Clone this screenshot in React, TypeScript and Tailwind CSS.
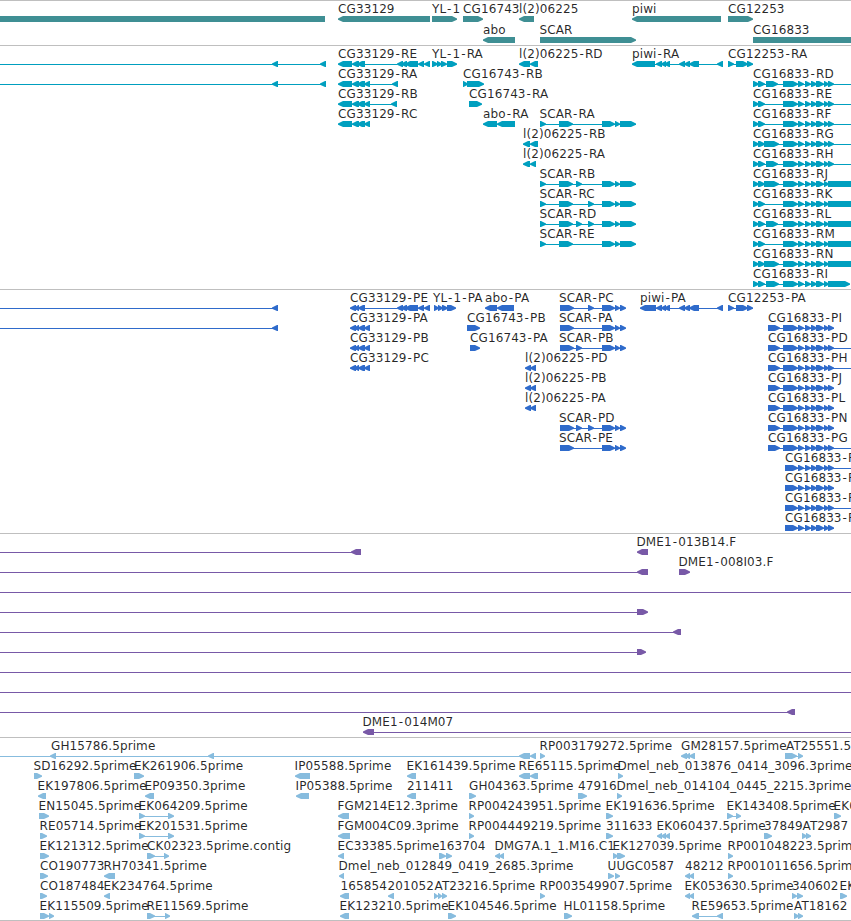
// Glyph notation: "a<b" reverse-strand block, "a>b" forward-strand block, "a-b" connector line.
type Feature = [row: number, x: number, label: string, glyphs: string];

type Track = {
  id: string;
  height: string;
  color: string;
  pitch: number;
  features: Feature[];
};

const SCAR_R = "540-636 540>546 559>573 602>615 615>620 620>636";
const SCAR_P = "560-625 560>574 602>615 615>620 620>626";
const TAIL = "798>804 805>811 811>817 816>824 824>829 828>834";
const R_START = "753-851 753>759 758>765 783>798 " + TAIL;
const R_LONG = R_START + " 828>880";
const P_START = "768-834 768>780 783>798 " + TAIL;
const P_SHORT = "785-834 785>798 " + TAIL;
const RA_EXONS = "338<352 352<359 357<365 364<370";
const PA_EXONS = "350<356 354<359 358<365 364<370";

const tracks: Track[] = [
  {
    id: "genes",
    height: "h-[45px]",
    color: "#3f8f94",
    pitch: 21,
    features: [
      [0, 0, "", "-20<325"],
      [0, 338, "CG33129", "338<430"],
      [0, 432, "YL-1", "432>457"],
      [0, 463, "CG16743", "463>483"],
      [0, 519, "l(2)06225", "519<534"],
      [0, 632, "piwi", "632<721"],
      [0, 728, "CG12253", "728>753"],
      [1, 483, "abo", "483<515"],
      [1, 539.5, "SCAR", "540>636"],
      [1, 753, "CG16833", "753>880"],
    ],
  },
  {
    id: "transcripts",
    height: "h-[244px]",
    color: "#009fbf",
    pitch: 20,
    features: [
      [0, 0, "", "0-325 272<278 320<326"],
      [0, 338, "CG33129-RE", "338<352 352<359 357<365 365-397 397<403 401<407 405<418 418<424 424<430"],
      [0, 432, "YL-1-RA", "432>438 437>442 441>447 447>457"],
      [0, 519, "l(2)06225-RD", "519<530 530<538"],
      [0, 632, "piwi-RA", "655-722 632<655 656<662 661<666 664<670 679<685 684<690 689<699 717<723"],
      [0, 728, "CG12253-RA", "728-753 728>734 736>748 747>753"],
      [1, 0, "", "0-325 272<278 320<326"],
      [1, 338, "CG33129-RA", RA_EXONS + " 370-393 392<398"],
      [1, 463, "CG16743-RB", "463>468 467>484"],
      [1, 753, "CG16833-RD", R_START + " 766>778"],
      [2, 338, "CG33129-RB", RA_EXONS + " 370-393 391<397"],
      [2, 469, "CG16743-RA", "469>482"],
      [2, 753, "CG16833-RE", R_START],
      [3, 338, "CG33129-RC", RA_EXONS],
      [3, 483, "abo-RA", "483<497 497<515"],
      [3, 539.5, "SCAR-RA", SCAR_R],
      [3, 753, "CG16833-RF", R_START],
      [4, 523, "l(2)06225-RB", "523<530 530<538"],
      [4, 753, "CG16833-RG", R_START + " 764>779"],
      [5, 523, "l(2)06225-RA", "523<530 530<536"],
      [5, 753, "CG16833-RH", R_START + " 766>778"],
      [6, 539.5, "SCAR-RB", SCAR_R + " 576>582"],
      [6, 753, "CG16833-RJ", R_LONG + " 764>779"],
      [7, 539.5, "SCAR-RC", SCAR_R + " 588>594"],
      [7, 753, "CG16833-RK", R_LONG],
      [8, 539.5, "SCAR-RD", SCAR_R + " 576>582 588>594"],
      [8, 753, "CG16833-RL", R_LONG + " 766>778"],
      [9, 539.5, "SCAR-RE", SCAR_R],
      [9, 753, "CG16833-RM", R_LONG],
      [10, 753, "CG16833-RN", R_LONG + " 764>779"],
      [11, 753, "CG16833-RI", "753-840 753>759 758>765 766>779 783>798 " + TAIL + " 828>850"],
    ],
  },
  {
    id: "cds",
    height: "h-[244px]",
    color: "#2f6bcb",
    pitch: 20,
    features: [
      [0, 0, "", "0-278 272<278"],
      [0, 350, "CG33129-PE", "350<356 354<359 358<365 365-397 397<403 401<407 405<418 418<424 424<430"],
      [0, 433, "YL-1-PA", "434>439 438>443 442>448 447>456"],
      [0, 485, "abo-PA", "485<497 497<514"],
      [0, 559, "SCAR-PC", SCAR_P + " 588>594"],
      [0, 640, "piwi-PA", "656-722 640<656 656<662 661<666 664<670 679<685 684<690 689<699 717<723"],
      [0, 728, "CG12253-PA", "728-753 728>734 736>748 747>753"],
      [1, 0, "", "0-278 272<278"],
      [1, 350, "CG33129-PA", PA_EXONS],
      [1, 467, "CG16743-PB", "467>480"],
      [1, 559, "SCAR-PA", SCAR_P],
      [1, 768, "CG16833-PI", P_START],
      [2, 350, "CG33129-PB", PA_EXONS],
      [2, 470, "CG16743-PA", "470>480"],
      [2, 559, "SCAR-PB", SCAR_P + " 576>582"],
      [2, 768, "CG16833-PD", P_START + " 834-851"],
      [3, 350, "CG33129-PC", PA_EXONS],
      [3, 525, "l(2)06225-PD", "525<531 530<536"],
      [3, 768, "CG16833-PH", P_START + " 834-851"],
      [4, 525, "l(2)06225-PB", "525<531 530<536"],
      [4, 768, "CG16833-PJ", P_START],
      [5, 525, "l(2)06225-PA", "525<531 530<536"],
      [5, 768, "CG16833-PL", P_START],
      [6, 559, "SCAR-PD", SCAR_P + " 576>582 588>594"],
      [6, 768, "CG16833-PN", P_START],
      [7, 559, "SCAR-PE", SCAR_P],
      [7, 768, "CG16833-PG", P_START + " 834-851"],
      [8, 785, "CG16833-P", P_SHORT + " 834-851"],
      [9, 785, "CG16833-P", P_SHORT],
      [10, 785, "CG16833-P", P_SHORT + " 834-851"],
      [11, 785, "CG16833-P", P_SHORT],
    ],
  },
  {
    id: "bacs",
    height: "h-[204px]",
    color: "#7859a7",
    pitch: 20,
    features: [
      [0, 0, "", "0-354 351<361"],
      [0, 636.5, "DME1-013B14.F", "637<648"],
      [1, 0, "", "0-640 637<648"],
      [1, 678.5, "DME1-008I03.F", "679>690"],
      [2, 0, "", "0-851"],
      [3, 0, "", "0-640 637>648"],
      [4, 0, "", "0-676 673<681"],
      [5, 0, "", "0-640 637>646"],
      [6, 0, "", "0-851"],
      [7, 0, "", "0-851"],
      [8, 0, "", "0-790 787<795"],
      [9, 362.5, "DME1-014M07", "363<374 374-851"],
    ],
  },
  {
    id: "ests",
    height: "h-[183px]",
    color: "#87bcde",
    pitch: 20,
    features: [
      [0, 51, "GH15786.5prime", "0-521 50<56 208<214 519<530 530<536"],
      [0, 539.5, "RP003179272.5prime", "540>545"],
      [0, 681, "GM28157.5prime", "681<687 685<690 689<695"],
      [0, 786, "AT25551.5", "785>797 796-800 798>803"],
      [1, 33.5, "SD16292.5prime", "34>42"],
      [1, 134, "EK261906.5prime", "134>144"],
      [1, 294.5, "IP05588.5prime", "295<310"],
      [1, 406.5, "EK161439.5prime", "407<416"],
      [1, 518.5, "RE65115.5prime", "519<530 530<538"],
      [1, 617.5, "Dmel_neb_013876_0414_3096.3prime", "618>623"],
      [2, 37.5, "EK197806.5prime", "38<46"],
      [2, 144.5, "EP09350.3prime", "145<154"],
      [2, 295.5, "IP05388.5prime", "296<309"],
      [2, 407, "211411", "407<416"],
      [2, 469, "GH04363.5prime", "469>476"],
      [2, 578, "47916", "578>587"],
      [2, 616.5, "Dmel_neb_014104_0445_2215.3prime", "617>622"],
      [3, 38.5, "EN15045.5prime", "39>49"],
      [3, 138.5, "EK064209.5prime", "139>145 144-168 168>174"],
      [3, 337.5, "FGM214E12.3prime", "338<349"],
      [3, 468.5, "RP004243951.5prime", "469>474"],
      [3, 605.5, "EK191636.5prime", "606>613"],
      [3, 726.5, "EK143408.5prime", "727>733 732-736 736>741"],
      [3, 833.5, "EK0", "834>841"],
      [4, 39.5, "RE05714.5prime", "40>47"],
      [4, 138.5, "EK201531.5prime", "139>145 144-168 168>174"],
      [4, 337.5, "FGM004C09.3prime", "338<350"],
      [4, 468.5, "RP004449219.5prime", "469>474"],
      [4, 606, "311633", "606>613"],
      [4, 656.5, "EK060437.5prime", "657<662 661<666 665<670"],
      [4, 764, "37849", "764>772"],
      [4, 802.5, "AT2987", "802>807 806>811"],
      [5, 39.5, "EK121312.5prime", "40>49"],
      [5, 147, "CK02323.5prime.contig", "147>155 154-164 164>169"],
      [5, 337.5, "EC33385.5prime", "338<344"],
      [5, 439, "163704", "439>446 446>452"],
      [5, 494.5, "DMG7A.1_1.M16.C1", "495<500 499<504"],
      [5, 612.5, "EK127039.5prime", "613>618 617>625"],
      [5, 727.5, "RP001048223.5prime", "728>733"],
      [6, 40, "CO190773", "40>48"],
      [6, 103.5, "RH70341.5prime", "104<115"],
      [6, 338.5, "Dmel_neb_012849_0419_2685.3prime", "339<344"],
      [6, 607.5, "UUGC0587", "608>614 615>620"],
      [6, 685, "48212", "685<690 689<694"],
      [6, 727.5, "RP001011656.5prime", "728>733"],
      [7, 40, "CO187484", "40>47"],
      [7, 103.5, "EK234764.5prime", "104<110"],
      [7, 340.5, "165854", "340<349"],
      [7, 387.5, "201052", "388<394"],
      [7, 434.5, "AT23216.5prime", "434>438 438>442 442>447"],
      [7, 539.5, "RP003549907.5prime", "540>545"],
      [7, 684.5, "EK053630.5prime", "685<690 689<694"],
      [7, 792, "340602", "792>797 797>803"],
      [7, 839.5, "EK", "840>847"],
      [8, 39.5, "EK115509.5prime", "40>49 49>54"],
      [8, 146.5, "RE11569.5prime", "147>155 154-165 165>170"],
      [8, 339.5, "EK123210.5prime", "340<349"],
      [8, 447.5, "EK104546.5prime", "448>456"],
      [8, 563.5, "HL01158.5prime", "564>572"],
      [8, 691.5, "RE59653.5prime", "692<699 698-718 717<723"],
      [8, 794, "AT18162", "794>799 798>803"],
    ],
  },
];

// Extra space per character, with more on both sides of a hyphen.
function spacing(label: string) {
  return [...label]
    .map((c, i) => (i === 0 ? 0 : c === "-" || label[i - 1] === "-" ? 1.1 : 0.1))
    .join(" ");
}

function Glyph({ spec, y }: { spec: string; y: number }) {
  const match = /^(-?\d+)([<>-])(\d+)$/.exec(spec);
  if (!match) return null;
  const a = Number(match[1]);
  const b = Number(match[3]);
  if (match[2] === "-") return <rect x={a} y={y + 3} width={b - a} height={1} />;

  const head = Math.min(b - a - 0.5, 5);
  const reverse = match[2] === "<";
  const tip = reverse ? a : b;
  const neck = reverse ? a + head : b - head;
  const end = reverse ? b : a;
  return (
    <polygon
      points={`${tip},${y + 2.4} ${neck},${y} ${end},${y} ${end},${y + 6} ${neck},${y + 6} ${tip},${y + 3.8}`}
    />
  );
}

function TrackRow({ track }: { track: Track }) {
  return (
    <section className={`${track.height} overflow-hidden border-t border-[#bfbfbf]`}>
      <svg width="851" height="100%" className="block" fill={track.color}>
        {track.features.map(([row, x, label, glyphs], i) => {
          const top = row * track.pitch;
          return (
            <g key={i}>
              {glyphs.split(" ").map((spec) => (
                <Glyph key={spec} spec={spec} y={top + 15} />
              ))}
              {label && (
                <text x={x} y={top + 12} dx={spacing(label)} className="fill-black/85 text-[12px]">
                  {label}
                </text>
              )}
            </g>
          );
        })}
      </svg>
    </section>
  );
}

export default function App() {
  return (
    <main className="flex h-[921px] w-[851px] flex-col overflow-hidden bg-white font-['DejaVu_Sans',sans-serif]">
      {tracks.map((track) => (
        <TrackRow key={track.id} track={track} />
      ))}
      <div className="h-px bg-[#bfbfbf]" />
    </main>
  );
}
